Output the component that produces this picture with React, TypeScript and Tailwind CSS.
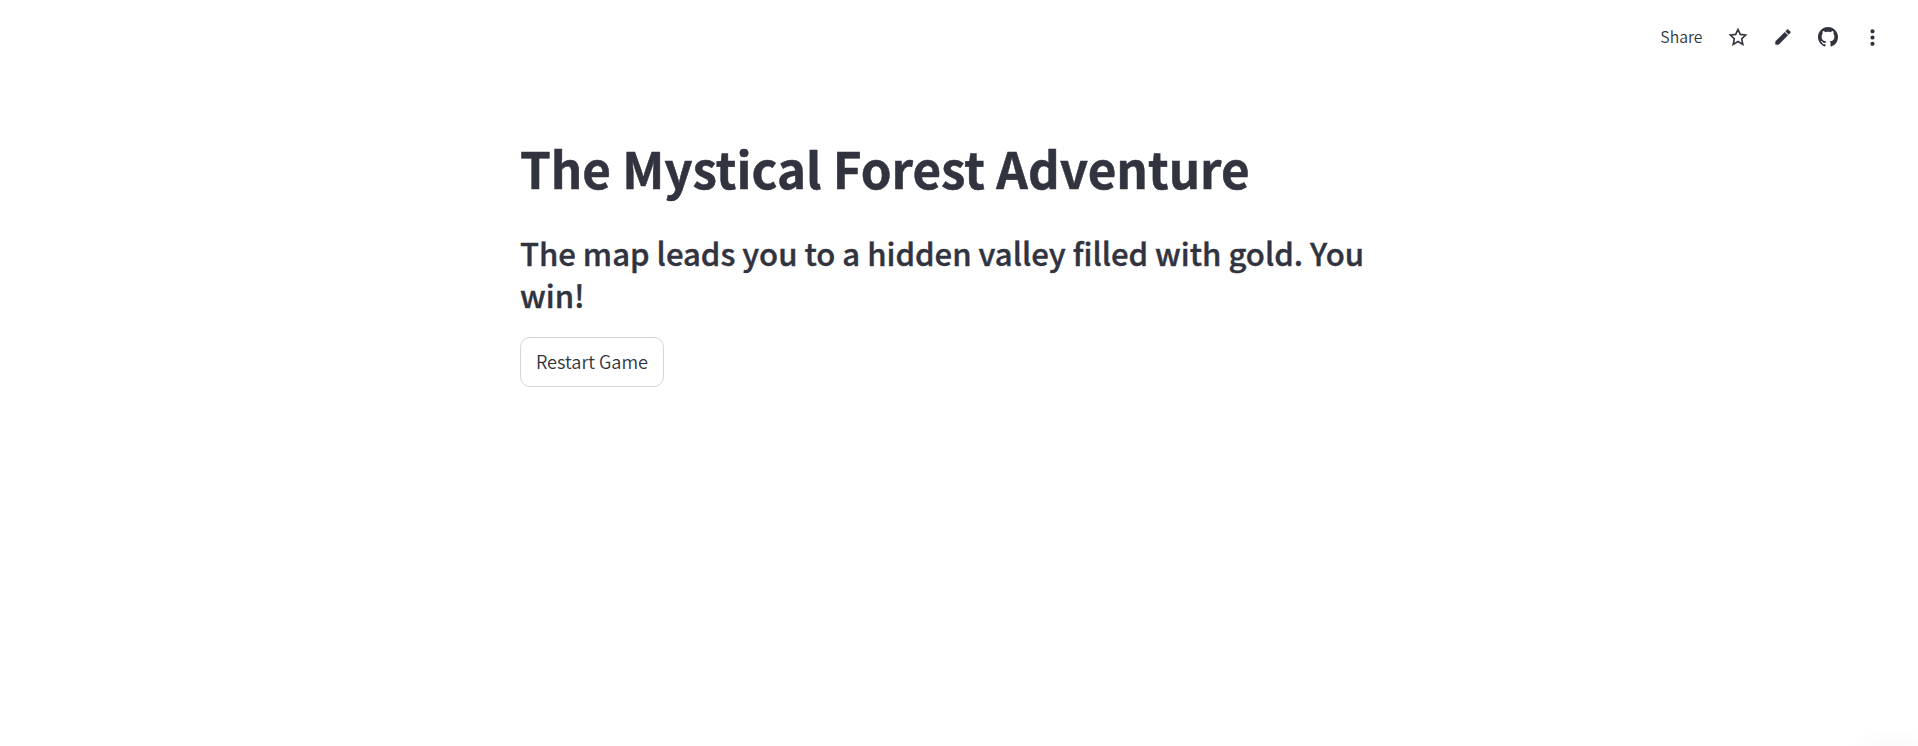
import { MdMoreVert } from "react-icons/md";

function StarIcon() {
  return (
    <svg viewBox="0 0 20 20" className="size-5" fill="none" stroke="currentColor" strokeWidth="1.6">
      <path d="M10 2.5 12.3 7.4 17.7 8 13.7 11.7 14.8 17.4 10 14.5 5.2 17.4 6.3 11.7 2.3 8 7.7 7.4Z" />
    </svg>
  );
}

function PencilIcon() {
  return (
    <svg viewBox="0 0 24 24" className="mb-px size-5" fill="currentColor" stroke="currentColor" strokeWidth="0.5">
      <path d="M3 17.46v3.04c0 .28.22.5.5.5h3.04c.13 0 .26-.05.35-.15L17.81 9.94l-3.75-3.75L3.15 17.1c-.1.1-.15.22-.15.36zM20.71 7.04c.39-.39.39-1.02 0-1.41l-2.34-2.34c-.39-.39-1.02-.39-1.41 0l-1.83 1.83 3.75 3.75 1.83-1.83z" />
    </svg>
  );
}

function GithubIcon() {
  return (
    <svg viewBox="0 0 16 16" className="size-5" fill="currentColor">
      <path d="M8 0C3.58 0 0 3.58 0 8c0 3.54 2.29 6.53 5.47 7.59.4.07.55-.17.55-.38 0-.19-.01-.82-.01-1.49-2.01.37-2.53-.49-2.69-.94-.09-.23-.48-.94-.82-1.13-.28-.15-.68-.52-.01-.53.63-.01 1.08.58 1.23.82.72 1.21 1.87.87 2.33.66.07-.52.28-.87.51-1.07-1.78-.2-3.64-.89-3.64-3.95 0-.87.31-1.59.82-2.15-.08-.2-.36-1.02.08-2.12 0 0 .67-.21 2.2.82.64-.18 1.32-.27 2-.27s1.36.09 2 .27c1.53-1.04 2.2-.82 2.2-.82.44 1.1.16 1.92.08 2.12.51.56.82 1.27.82 2.15 0 3.07-1.87 3.75-3.65 3.95.29.25.54.73.54 1.48 0 1.07-.01 1.93-.01 2.2 0 .21.15.46.55.38A8.01 8.01 0 0 0 16 8c0-4.42-3.58-8-8-8Z" />
    </svg>
  );
}

export default function App() {
  return (
    <div className="relative flex h-[746px] w-full flex-col overflow-hidden bg-white font-['Noto_Sans_CJK_SC',sans-serif] text-[#31333f]">
      <header className="flex h-[74px] shrink-0 items-center justify-end pr-[23px]">
        <button className="mr-[12.5px] text-[15.8px] leading-[22px] font-[350]">Share</button>
        <button aria-label="Favorite" className="flex w-[45px] justify-center"><StarIcon /></button>
        <button aria-label="Edit" className="flex w-[45px] justify-center"><PencilIcon /></button>
        <button aria-label="View source" className="flex w-[45px] justify-center"><GithubIcon /></button>
        <button aria-label="Menu" className="flex w-[45px] justify-center"><MdMoreVert className="size-[25px]" /></button>
      </header>
      <main className="ml-[520px] w-[880px] pt-[58px]">
        <h1 className="text-[49.3px] leading-[72px] font-bold whitespace-nowrap [-webkit-text-stroke:0.5px_#31333f]">The Mystical Forest Adventure</h1>
        <h2 className="mt-[28px] text-[31.08px] leading-[42px] font-medium [-webkit-text-stroke:0.4px_#31333f]">The map leads you to a hidden valley filled with gold. You win!</h2>
        <button className="mt-[21px] flex h-[50px] w-[144px] items-center justify-center rounded-[10px] border border-[#d6d6d9] pb-[2px] text-[18.1px] leading-[26px] font-[350]">Restart Game</button>
      </main>
      <div className="absolute -right-[20px] -bottom-[22px] h-[40px] w-[90px] rounded-full bg-[radial-gradient(closest-side,#f9f9f9,#ffffff)]" />
    </div>
  );
}
